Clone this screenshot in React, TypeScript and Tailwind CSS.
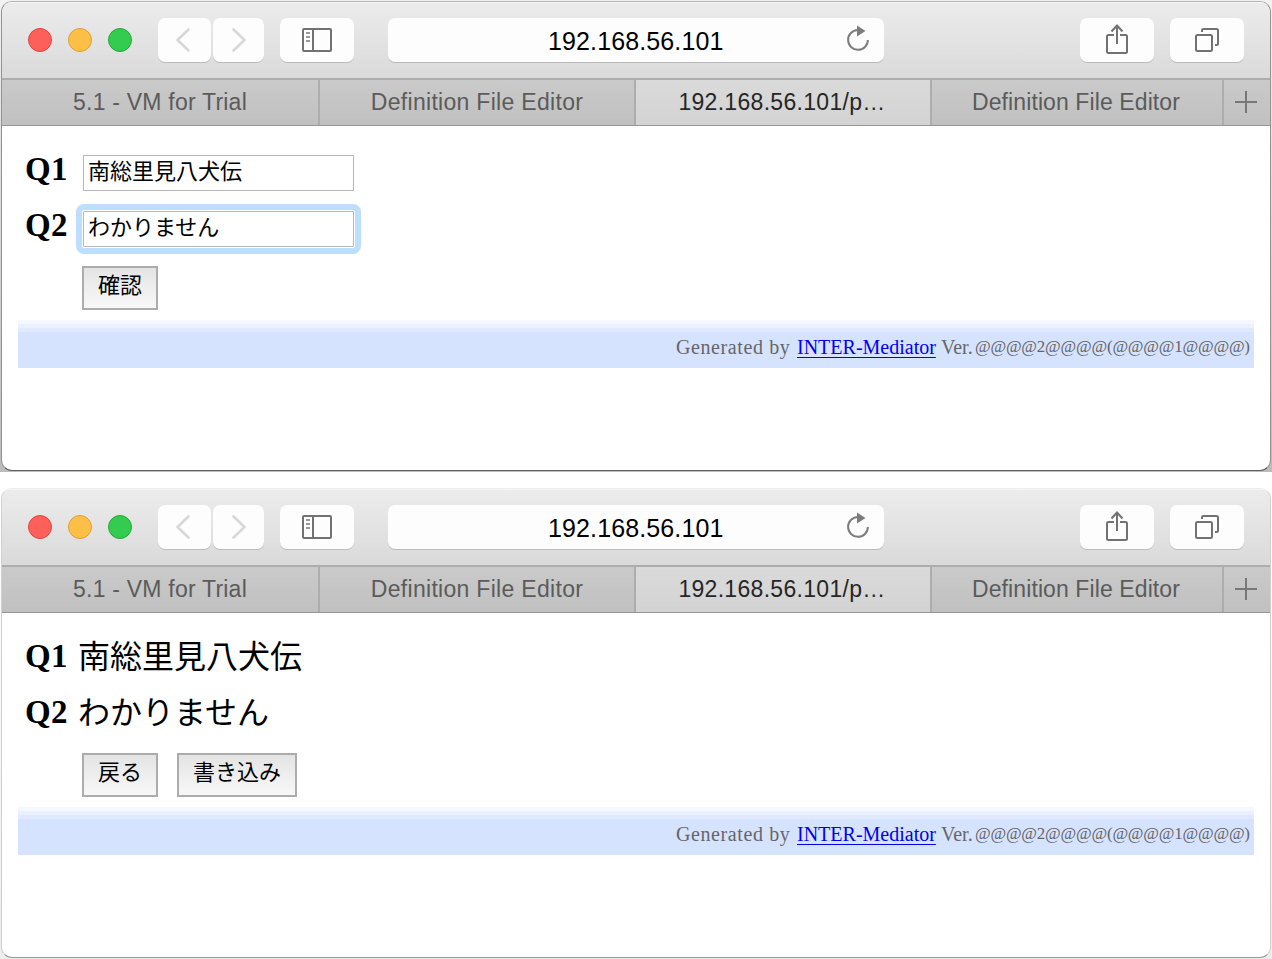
import type { ReactNode } from "react";

const SANS = "font-['Liberation_Sans','Noto_Sans_CJK_JP',sans-serif]";
const SERIF = "font-['Liberation_Serif','Noto_Sans_CJK_JP',serif]";

function ToolButton({ className, children }: { className: string; children: ReactNode }) {
  return (
    <div
      className={`flex h-11 shrink-0 items-center justify-center rounded-[7px] bg-[#fdfdfd] shadow-[0_1px_0.5px_#b9bcbb] ${className}`}
    >
      {children}
    </div>
  );
}

function Toolbar() {
  return (
    <div className="flex h-[76px] items-start bg-linear-to-b from-[#ececec] to-[#dadada] pt-4 pl-[26px] shadow-[inset_0_1px_0_#f6f6f6]">
      <div className="flex h-11 w-[130px] shrink-0 items-center gap-4">
        <span className="size-6 rounded-full border border-[#e2463f] bg-[#fd5f5b]" />
        <span className="size-6 rounded-full border border-[#e09f3a] bg-[#febf47]" />
        <span className="size-6 rounded-full border border-[#25aa38] bg-[#33cb50]" />
      </div>
      <ToolButton className="w-[53px]">
        <svg width="53" height="44" fill="none" stroke="#d8d8d8" strokeWidth="2.6" strokeLinecap="round" strokeLinejoin="round">
          <path d="M30.5 11.5 19.5 22l11 10.5" />
        </svg>
      </ToolButton>
      <ToolButton className="ml-[2px] w-[51px]">
        <svg width="51" height="44" fill="none" stroke="#d8d8d8" strokeWidth="2.6" strokeLinecap="round" strokeLinejoin="round">
          <path d="M20.5 11.5 31.5 22l-11 10.5" />
        </svg>
      </ToolButton>
      <ToolButton className="ml-4 w-[74px]">
        <svg width="30" height="24" fill="none" stroke="#727272" strokeWidth="2">
          <rect x="1" y="1" width="28" height="22" rx="1" />
          <path d="M11 1v22" />
          <path d="M4 5h4M4 9h4M4 13h4" stroke="#999" />
        </svg>
      </ToolButton>
      <ToolButton className="ml-[34px] w-[496px]">
        <div className="flex w-full items-center">
          <span className="ml-[160px] w-[176px] pt-[2px] text-[25px] leading-[44px] tracking-[0.12px] whitespace-nowrap text-black">
            192.168.56.101
          </span>
          <svg width="26" height="30" viewBox="0 0 26 30" className="mb-[6px] ml-[121px]">
            <path d="M12.7 8A9.9 9.9 0 1 0 22.9 18" fill="none" stroke="#7c7c7c" strokeWidth="2" />
            <path d="M12 3.500 20.500 9 12 14.500z" fill="#7c7c7c" />
          </svg>
        </div>
      </ToolButton>
      <ToolButton className="ml-[196px] w-[74px]">
        <svg width="74" height="44" fill="none" stroke="#727272" strokeWidth="2">
          <path d="M34 17h-5.500q-1.500 0-1.500 1.500v15q0 1.500 1.500 1.500h17q1.500 0 1.500-1.500v-15q0-1.500-1.500-1.500H40" />
          <path d="M37 26V8M31.500 13.500 37 7.500l5.500 6" />
        </svg>
      </ToolButton>
      <ToolButton className="ml-4 w-[74px]">
        <svg width="74" height="44" fill="none" stroke="#727272" strokeWidth="2">
          <rect x="26" y="17" width="16" height="16" rx="1.500" />
          <path d="M32 14v-1.500q0-1.500 1.500-1.500h13q1.500 0 1.500 1.500v13q0 1.500-1.500 1.500H45" />
        </svg>
      </ToolButton>
    </div>
  );
}

function Tab({ className, children }: { className: string; children: ReactNode }) {
  return (
    <div className={`flex h-full shrink-0 items-center justify-center whitespace-nowrap ${className}`}>
      {children}
    </div>
  );
}

function TabBar() {
  return (
    <div className="flex h-12 border-t-2 border-b border-t-[#adadad] border-b-[#969696] bg-linear-to-b from-[#cacaca] to-[#c0c0c0] text-[23px] leading-none text-[#5b5b5b]">
      <Tab className="w-[318px] border-r-2 border-[#adadad] tracking-[0.22px]">5.1 - VM for Trial</Tab>
      <Tab className="w-[316px] border-r-2 border-[#adadad] tracking-[0.3px]">Definition File Editor</Tab>
      <Tab className="w-[294px] bg-linear-to-b from-[#dadada] to-[#d3d3d3] pr-[2px] tracking-[0.3px] text-[#262626]">
        192.168.56.101/p…
      </Tab>
      <Tab className="w-[294px] border-x-2 border-[#adadad] pr-[2px] tracking-[0.1px]">Definition File Editor</Tab>
      <Tab className="w-[46px]">
        <svg width="46" height="44" stroke="#777" strokeWidth="2" className="mb-[2px]">
          <path d="M11 22h22M22 11v22" />
        </svg>
      </Tab>
    </div>
  );
}

function Footer() {
  return (
    <div className={`mx-4 h-12 ${SERIF}`}>
      <div className="h-1 bg-[#f5f8ff]" />
      <div className="h-1 bg-[#ebf1ff]" />
      <div className="h-1 bg-[#e0e9ff]" />
      <div className="flex h-9 justify-end bg-[#d6e3ff] pr-1 text-[20px] leading-[30px] whitespace-nowrap text-[#666]">
        <span className="w-[121px] tracking-[0.6px]">Generated by</span>
        <a className="w-[139px] text-[#0000ee] underline decoration-1 underline-offset-[3px]">INTER-Mediator</a>
        <span className="ml-[5px] w-[34px]">Ver.</span>
        <span className="w-[275px] text-[17px] tracking-[-0.2px]">@@@@2@@@@(@@@@1@@@@)</span>
      </div>
    </div>
  );
}

function Question({ label, children }: { label: string; children: ReactNode }) {
  return (
    <div className="flex h-14">
      <div className={`w-[55px] shrink-0 text-[33px] leading-[52px] font-bold tracking-[0.4px] ${SERIF}`}>{label}</div>
      {children}
    </div>
  );
}

function Field({ value, focused }: { value: string; focused?: boolean }) {
  return (
    <div
      className={`mt-3 ml-[3px] h-9 w-[271px] border border-[#b8b8b8] bg-white pl-1 text-[22px] leading-[32px] ${
        focused ? "rounded-[1px] outline-[6px] outline-offset-[1px] outline-[#bedefd]" : ""
      }`}
    >
      {value}
    </div>
  );
}

function Answer({ children }: { children: ReactNode }) {
  return <div className={`ml-[-2px] text-[32px] leading-[54px] ${SERIF}`}>{children}</div>;
}

function Button({ className, children }: { className: string; children: ReactNode }) {
  return (
    <button
      className={`h-11 shrink-0 border-2 border-[#acacac] bg-linear-to-b from-[#e4e4e4] to-[#f8f8f8] pb-1 text-[22px] leading-[36px] whitespace-nowrap ${className}`}
    >
      {children}
    </button>
  );
}

function BrowserWindow({ frame, edge, children }: { frame: string; edge: string; children: ReactNode }) {
  return (
    <section className={`h-[472px] w-[1272px] p-px ${frame}`}>
      <div className={`h-[470px] overflow-hidden rounded-[11px] border bg-white ${edge}`}>
        <Toolbar />
        <TabBar />
        <div className="pt-[17px] pl-[23px]">{children}</div>
        <Footer />
      </div>
    </section>
  );
}

export default function App() {
  return (
    <main className={`flex h-[959px] w-[1272px] flex-col justify-between overflow-hidden bg-white text-black ${SANS}`}>
      <BrowserWindow
        frame="bg-linear-to-b from-[#f2f2f2] to-[#bcbcbc]"
        edge="border-x-[#929292] border-t-[#b5b5b5] border-b-[#606060]"
      >
        <Question label="Q1">
          <Field value="南総里見八犬伝" />
        </Question>
        <Question label="Q2">
          <Field value="わかりません" focused />
        </Question>
        <div className="flex h-[65px] pt-[11px] pl-[57px]">
          <Button className="w-[76px]">確認</Button>
        </div>
      </BrowserWindow>
      <BrowserWindow
        frame="bg-linear-to-b from-white to-[#ededed]"
        edge="border-x-[#d0d0d0] border-t-[#eeeeee] border-b-[#9b9b9b]"
      >
        <Question label="Q1">
          <Answer>南総里見八犬伝</Answer>
        </Question>
        <Question label="Q2">
          <Answer>わかりません</Answer>
        </Question>
        <div className="flex h-[65px] gap-[19px] pt-[11px] pl-[57px]">
          <Button className="w-[76px]">戻る</Button>
          <Button className="w-[120px]">書き込み</Button>
        </div>
      </BrowserWindow>
    </main>
  );
}
